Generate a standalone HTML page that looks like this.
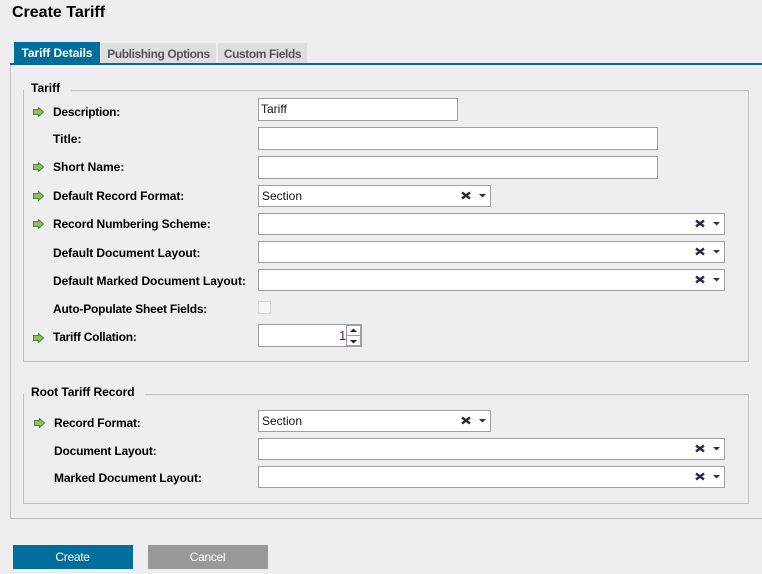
<!DOCTYPE html>
<html><head><meta charset="utf-8"><style>
html,body{margin:0;padding:0}
body{width:762px;height:574px;background:#eeeef0;position:relative;overflow:hidden;font-family:"Liberation Sans",sans-serif;font-size:12px;color:#111}
div,span,svg{position:absolute;box-sizing:border-box}
.h{left:12px;top:3px;font-size:16px;font-weight:bold;line-height:20px;color:#000;white-space:nowrap}
.tab{height:20px;background:#dedee0;color:#555;font-weight:bold;line-height:22px;text-align:center;white-space:nowrap;top:43px;letter-spacing:-.42px}
.fs{left:23px;width:726px;border:1px solid #bfbfc1}
.lg{left:24px;background:#eeeef0;font-weight:bold;line-height:16px;padding:0 11px 0 7px;white-space:nowrap;color:#000}
.l{font-weight:bold;line-height:16px;white-space:nowrap;color:#000}
.i{left:258px;background:#fff;border:1px solid #a0a0a0;line-height:20px;padding-left:3px;color:#111;white-space:nowrap}
.btn{top:545px;width:120px;height:24px;color:#fff;text-align:center;line-height:24px;letter-spacing:-.3px;padding-right:1px}
</style></head><body>
<div class="h">Create Tariff</div>

<div class="tab" style="left:14px;width:86px;top:42px;height:21px;background:#006e9c;color:#fff;line-height:23px;letter-spacing:-.05px">Tariff Details</div>
<div class="tab" style="left:101px;width:115px">Publishing Options</div>
<div class="tab" style="left:218px;width:89px">Custom Fields</div>
<div style="left:10px;top:63px;width:752px;height:2px;background:#006e9c"></div>
<div style="left:10px;top:65px;width:752px;height:454px;border-left:1px solid #bfbfc1;border-bottom:1px solid #bfbfc1"></div>

<div class="fs" style="top:90px;height:272px"></div>
<div class="lg" style="top:80px">Tariff</div>
<div class="fs" style="top:394px;height:110px"></div>
<div class="lg" style="top:384px;letter-spacing:-.05px;padding-right:10px">Root Tariff Record</div>

<svg style="left:33px;top:107px" width="11" height="10" viewBox="0 0 11 10"><path d="M.5 2.500h5V.5L10.500 5 5.500 9.500V7.500h-5z" fill="#8fbf60" stroke="#4f8a2c"/></svg>
<svg style="left:33px;top:162px" width="11" height="10" viewBox="0 0 11 10"><path d="M.5 2.500h5V.5L10.500 5 5.500 9.500V7.500h-5z" fill="#8fbf60" stroke="#4f8a2c"/></svg>
<svg style="left:33px;top:191px" width="11" height="10" viewBox="0 0 11 10"><path d="M.5 2.500h5V.5L10.500 5 5.500 9.500V7.500h-5z" fill="#8fbf60" stroke="#4f8a2c"/></svg>
<svg style="left:33px;top:219px" width="11" height="10" viewBox="0 0 11 10"><path d="M.5 2.500h5V.5L10.500 5 5.500 9.500V7.500h-5z" fill="#8fbf60" stroke="#4f8a2c"/></svg>
<svg style="left:33px;top:333px" width="11" height="10" viewBox="0 0 11 10"><path d="M.5 2.500h5V.5L10.500 5 5.500 9.500V7.500h-5z" fill="#8fbf60" stroke="#4f8a2c"/></svg>
<svg style="left:34px;top:418px" width="11" height="10" viewBox="0 0 11 10"><path d="M.5 2.500h5V.5L10.500 5 5.500 9.500V7.500h-5z" fill="#8fbf60" stroke="#4f8a2c"/></svg>

<div class="l" style="left:53px;top:104px;letter-spacing:-.25px">Description:</div>
<div class="l" style="left:53px;top:131px">Title:</div>
<div class="l" style="left:53px;top:159px">Short Name:</div>
<div class="l" style="left:53px;top:188px;letter-spacing:-.1px">Default Record Format:</div>
<div class="l" style="left:53px;top:216px;letter-spacing:-.16px">Record Numbering Scheme:</div>
<div class="l" style="left:53px;top:245px;letter-spacing:-.08px">Default Document Layout:</div>
<div class="l" style="left:53px;top:273px;letter-spacing:-.06px">Default Marked Document Layout:</div>
<div class="l" style="left:53px;top:301px;letter-spacing:-.22px">Auto-Populate Sheet Fields:</div>
<div class="l" style="left:53px;top:329px;letter-spacing:-.25px">Tariff Collation:</div>
<div class="l" style="left:54px;top:415px;letter-spacing:-.2px">Record Format:</div>
<div class="l" style="left:54px;top:443px;letter-spacing:-.18px">Document Layout:</div>
<div class="l" style="left:54px;top:470px;letter-spacing:-.13px">Marked Document Layout:</div>

<div class="i" style="top:98px;width:200px;height:23px;padding-left:2px">Tariff</div>
<div class="i" style="top:127px;width:400px;height:23px"></div>
<div class="i" style="top:156px;width:400px;height:23px"></div>

<div class="i" style="top:185px;width:233px;height:22px">Section</div>
<div class="i" style="top:213px;width:467px;height:22px"></div>
<div class="i" style="top:241px;width:467px;height:22px"></div>
<div class="i" style="top:269px;width:467px;height:22px"></div>
<div class="i" style="top:410px;width:233px;height:22px">Section</div>
<div class="i" style="top:438px;width:467px;height:22px"></div>
<div class="i" style="top:466px;width:467px;height:22px"></div>

<svg style="left:0;top:0" width="762" height="574" viewBox="0 0 762 574">
<g stroke="#2a2a3a" stroke-width="2.400" fill="none">
<path d="M462 192.500l8 6m0-6l-8 6"/>
<path d="M696 220.500l8 6m0-6l-8 6"/>
<path d="M696 248.500l8 6m0-6l-8 6"/>
<path d="M696 276.500l8 6m0-6l-8 6"/>
<path d="M462 417.500l8 6m0-6l-8 6"/>
<path d="M696 445.500l8 6m0-6l-8 6"/>
<path d="M696 473.500l8 6m0-6l-8 6"/>
</g>
<g fill="#333340">
<path d="M479 194h7l-3.500 3.500z"/>
<path d="M713 222h7l-3.500 3.500z"/>
<path d="M713 250h7l-3.500 3.500z"/>
<path d="M713 278h7l-3.500 3.500z"/>
<path d="M479 419h7l-3.500 3.500z"/>
<path d="M713 447h7l-3.500 3.500z"/>
<path d="M713 475h7l-3.500 3.500z"/>
</g>
</svg>

<div style="left:258px;top:301px;width:13px;height:13px;background:#f6f6f7;border:1px solid #d4d4d6"></div>

<div class="i" style="top:324px;width:104px;height:23px"></div>
<div style="left:339px;top:329px;color:#5a1a6a;line-height:14px;font-size:13px">1</div>
<div style="left:346px;top:325px;width:15px;height:11px;background:#fff;border:1px solid #a0a0a0"></div>
<div style="left:346px;top:335px;width:15px;height:11px;background:#fff;border:1px solid #a0a0a0"></div>
<svg style="left:346px;top:325px" width="15" height="21" viewBox="0 0 15 21"><path d="M4 7h7L7.500 3.500zM4 15h7l-3.500 3.500z" fill="#222"/></svg>

<div class="btn" style="left:13px;background:#006e9c">Create</div>
<div class="btn" style="left:148px;background:#999">Cancel</div>
</body></html>
